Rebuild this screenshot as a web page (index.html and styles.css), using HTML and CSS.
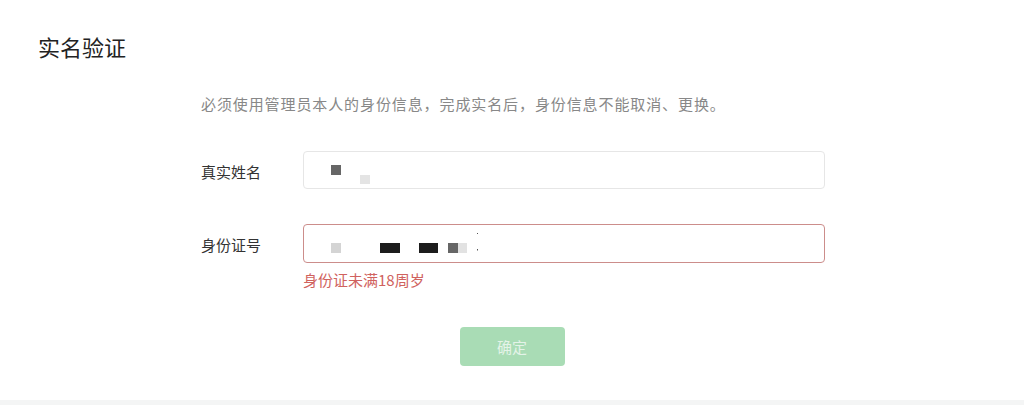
FILE: index.html
```html
<!DOCTYPE html>
<html lang="zh-CN">
<head>
<meta charset="utf-8">
<title>实名验证</title>
<link rel="stylesheet" href="styles.css">
</head>
<body>
<div class="page">
  <h1 class="title">实名验证</h1>
  <p class="desc">必须使用管理员本人的身份信息，完成实名后，身份信息不能取消、更换。</p>
  <div class="row row-name">
    <label class="label">真实姓名</label>
    <div class="input">
      <svg class="mask" width="200" height="36" viewBox="0 0 200 36">
        <rect x="27" y="13" width="10" height="10" fill="#666"/>
        <rect x="56" y="23" width="10" height="9" fill="#e4e4e4"/>
      </svg>
    </div>
  </div>
  <div class="row row-id">
    <label class="label">身份证号</label>
    <div class="input input-error">
      <svg class="mask" width="200" height="36" viewBox="0 0 200 36">
        <rect x="27" y="18" width="10" height="10" fill="#d4d4d4"/>
        <rect x="76" y="18" width="20" height="10" fill="#1c1c1c"/>
        <rect x="115" y="18" width="19" height="10" fill="#1c1c1c"/>
        <rect x="144" y="18" width="10" height="10" fill="#666"/>
        <rect x="154" y="18" width="9" height="10" fill="#e2e2e2"/>
        <rect x="173" y="8" width="1" height="1" fill="#555"/>
        <rect x="173" y="24" width="1" height="1.5" fill="#555"/>
      </svg>
    </div>
  </div>
  <p class="error">身份证未满18周岁</p>
  <div class="actions">
    <button class="btn" type="button" disabled>确定</button>
  </div>
</div>
</body>
</html>
```

FILE: styles.css
```css
html, body {
  margin: 0;
  padding: 0;
}
body {
  background: #f4f5f5;
  font-family: "Noto Sans CJK SC", "Noto Sans", sans-serif;
  color: #333;
}
.page {
  background: #fff;
  height: 400px;
  box-sizing: border-box;
  padding-top: 32px;
}
.title {
  margin: 0 0 0 38px;
  font-size: 22px;
  line-height: 28px;
  font-weight: 400;
  color: #222;
}
.desc {
  margin: 34px 0 0 201px;
  font-size: 15px;
  line-height: 20px;
  letter-spacing: 0.9px;
  color: #888;
}
.row {
  display: flex;
  align-items: center;
  margin-left: 201px;
}
.row-name {
  margin-top: 37px;
}
.row-id {
  margin-top: 35px;
}
.label {
  width: 102px;
  font-size: 15px;
  line-height: 20px;
  color: #333;
  padding-top: 3px;
}
.input {
  width: 522px;
  height: 38px;
  box-sizing: border-box;
  border: 1px solid #e6e6e6;
  border-radius: 4px;
  background: #fff;
}
.input-error {
  height: 39px;
  border-color: #cc8d8b;
}
.mask {
  display: block;
}
.error {
  margin: 7px 0 0 303px;
  font-size: 15px;
  line-height: 20px;
  color: #d0625e;
}
.actions {
  display: flex;
  justify-content: center;
  margin-top: 37px;
}
.btn {
  width: 105px;
  height: 39px;
  border: none;
  border-radius: 4px;
  background: #a9dcb5;
  color: #e4f3e8;
  font-family: inherit;
  font-size: 15px;
  padding: 0;
}
```
